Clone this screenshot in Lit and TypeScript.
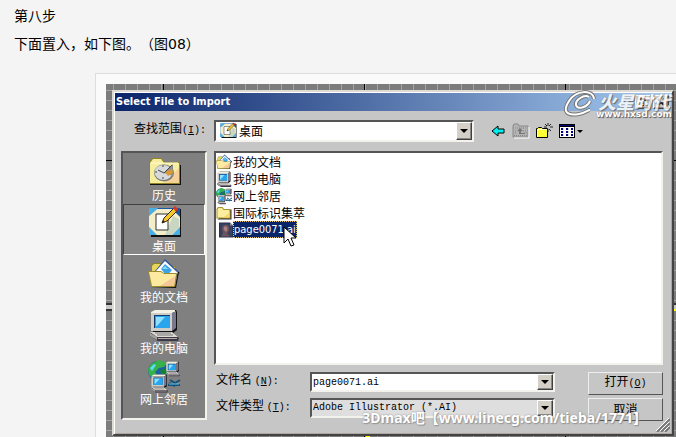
import { LitElement, html, css, svg } from "lit";
import { customElement, property, state } from "lit/decorators.js";
import { classMap } from "lit/directives/class-map.js";

const pc = svg`
  <path d="M4 4l4-3h20l1 2v18l-4 3H5z" fill="#111"/>
  <path d="M3 3l4-2h20v2l-3 1H4v17H3z" fill="#f4f2e4"/>
  <path d="M3 4h21v18H3z" fill="#cfcdc8"/><path d="M24 4l4-2v17l-4 3z" fill="#77788c"/>
  <path d="M6 6h16v13H6z" fill="#16396b"/><path d="M7 7h15v12H7z" fill="#28a5ec"/>
  <path d="M8 8h9l-8 9H8z" fill="#8fe0ff"/>
  <path d="M3 24l21-1 7 6-1 3H10L2 27z" fill="#3a3a46"/>
  <path d="M2 23h22l6 5H9z" fill="#dedad2"/><path d="M2 24l7 4v3l-7-4z" fill="#a5a09c"/>
  <path d="M7 24h16M9 26h16" stroke="#77747c"/><path d="M10 29h19v1H10z" fill="#b8a9a8"/>`;

const art: Record<string, unknown> = {
  history: svg`
    <path d="M2 29h31V9h-1v19H2z" fill="#111"/>
    <path d="M1 6l3-4h9l4 4h15v22H1z" fill="#8d8525"/>
    <path d="M2 7l3-4h8l3 4h15v20H2z" fill="#f6ee9e"/>
    <path d="M16 27l15-15v15z" fill="#f5d199"/><path d="M3 7h27" stroke="#fffbd8"/>
    <ellipse cx="16" cy="17" rx="10" ry="8.500" fill="#777"/>
    <ellipse cx="15.500" cy="16.500" rx="9" ry="7.500" fill="#d7d9da"/>
    <path d="M16 17l9-9v12z" fill="#8a8d94"/><path d="M17 16l7-3 1 4-5 3z" fill="#d89a32"/>
    <path d="M16 17l8-8M16 17l-6-3M15 9v2M7 16h2M15 23v-2" stroke="#444"/>`,
  desktop: svg`
    <path d="M2 2h31v28H3z" fill="#111"/><path d="M1 1h31v27H1z" fill="#1559a8"/>
    <path d="M1 1h9L1 9zM1 20l9 8H1zM32 20v8h-9z" fill="#47b1e7"/>
    <path d="M9 2h15l8 8v10l-8 8H9l-8-8V9z" fill="#f3edc9"/>
    <path d="M25 9l6 3v8l-7 8h-7z" fill="#c9d6c2"/>
    <path d="M8 7h12v16H8z" fill="#fff" stroke="#333"/>
    <path d="M14 16l2-5L26 1l3 3-10 10z" fill="#f6c62f" stroke="#3a2a13"/>
    <path d="M25 1l2-2 3 3-2 3z" fill="#dc3424"/><path d="M14 16l1-3 2 2z" fill="#222"/>`,
  documents: svg`
    <path d="M3 8l2-3h8l3 3h12v21H3z" fill="#8d8525"/><path d="M4 8l2-2h6l3 3h12v10H4z" fill="#e8d55c"/>
    <path d="M7 13L17 1l15 14-10 10z" fill="#31579c"/><path d="M8 13l9-10 13 12-9 9z" fill="#fff"/>
    <path d="M13 11l4-5 7 6-5 6z" fill="#3ba2e4"/><path d="M14 11l3-3 3 3z" fill="#8ad8fa"/>
    <path d="M2 30h26l3-16h-1l-3 15z" fill="#111"/>
    <path d="M0 13h13l3 2h13l-2 14H3z" fill="#9d8b30"/><path d="M1 14h12l3 2h12l-2 12H4z" fill="#fbeaa0"/>
    <path d="M12 28l15-10-1 10z" fill="#f5c896"/>`,
  computer: pc,
  network: svg`
    <circle cx="10" cy="11" r="10" fill="#1b5fa8"/>
    <path d="M3 4l8-4 8 3-3 4-5 1-4 4 3 4-4 2-5-3-1-6z" fill="#37b14a"/>
    <path d="M12 10l7-2 1 6-6 4z" fill="#17803a"/><path d="M2 8l4-4 2 1-4 6z" fill="#5fdcf5"/>
    <g transform="translate(17 1) scale(.48)">${pc}</g>
    <g transform="translate(2 14) scale(.58)">${pc}</g>
    <path d="M20 25h12M22 20l5 3 5-3M21 23l6 3" stroke="#164f77" stroke-width="2" fill="none"/>
    <path d="M21 24h10" stroke="#5cc4f0"/>`,
  folder: svg`
    <path d="M3 29h28V9h-2z" fill="#333"/>
    <path d="M1 8l3-4h9l3 4h13v19H1z" fill="#a3942d"/><path d="M3 9l2-3h7l3 4h12v15H3z" fill="#fcee9c"/>
    <path d="M14 25l13-9v9z" fill="#f7d66c"/>`,
  ai: svg`
    <path d="M2 1h22l6 6v24H2z" fill="#26324e"/><path d="M4 3h18l6 5v21H4z" fill="#38415d"/>
    <path d="M9 10c2-6 12-6 13 0s0 10-4 12l6 7H7l3-9c-2-3-3-6-1-10z" fill="#6b5460"/>
    <path d="M12 10c3-4 8 0 7 4s-2 6-4 5-5-6-3-9z" fill="#a87f84"/>
    <path d="M24 1v6h6z" fill="#8b93a6"/>`,
  back: svg`<path d="M1 8l6-5v3h6v4H7v3z" fill="#00f0f0" stroke="#000"/>`,
  up: svg`
    <path d="M-1 14V3l1-2h4l1 2h9v11z" fill="#b4b4b4" stroke="#888"/>
    <path d="M0 12.500h13M1 5h12M1 8h2M1 10h2M9 8h4M10 10h3" stroke="#888" stroke-dasharray="1 1"/>
    <path d="M3 8l3-3 3 3H7v2h4v1H5V8z" fill="#777"/><path d="M0 15h15V4" stroke="#fff" fill="none"/>`,
  create: svg`
    <path d="M-0.500 14.500v-9h1l1-1h3l1 1h5v9z" fill="#ffff36" stroke="#000"/>
    <path d="M0 14v-8h10v1H1v7z" fill="#ffffb0"/>
    <path d="M11 0v3M11 6v3M7 4h3M13 4h3M8 1l2 2M14 1l-2 2M14 8l-2-2" stroke="#222"/>`,
  view: svg`
    <path d="M-1 1h16v14H-1z" fill="#000"/><path d="M0 4h14v10H0z" fill="#fff"/><path d="M0 2h14v1H0z" fill="#000080"/>
    <path d="M1 6h2M6 6h2M11 6h2M1 9h2M6 9h2M11 9h2M1 12h2M6 12h2M11 12h2" stroke="#000080" stroke-width="2"/>
    <path d="M3 6h1M8 6h1M3 9h1M8 9h1M3 12h1M8 12h1" stroke="#aaa"/>`,
};

@customElement("win-icon")
class WinIcon extends LitElement {
  @property() name = "folder";
  @property({ type: Number }) grid = 32;
  static styles = css`
    :host { display: block; flex: none; width: 16px; height: 16px; }
    svg { display: block; width: 100%; height: 100%; overflow: visible; }
  `;
  render() {
    return html`<svg viewBox="0 0 ${this.grid} ${this.grid}" fill="none" aria-hidden="true">${art[this.name]}</svg>`;
  }
}

@customElement("app-root")
class AppRoot extends LitElement {
  @state() place = "desktop";

  private places = [
    ["history", "历史"],
    ["desktop", "桌面"],
    ["documents", "我的文档"],
    ["computer", "我的电脑"],
    ["network", "网上邻居"],
  ];
  private files = [
    ["documents", "我的文档"],
    ["computer", "我的电脑"],
    ["network", "网上邻居"],
    ["folder", "国际标识集萃"],
  ];

  static styles = css`
    :host {
      display: block;
      background: #f4f4f4;
      color: #000;
      font: 12px/14px "Noto Sans CJK SC", sans-serif;
    }
    * { box-sizing: border-box; }
    button, input, select { font: inherit; color: inherit; margin: 0; padding: 0; border: 0; border-radius: 0; background: none; outline: 0; }
    .prose { padding: 2px 14px 15px; font: 14px/28px "DejaVu Sans", "Noto Sans CJK SC", sans-serif; text-spacing-trim: space-all; }
    .prose p { margin: 0; }
    .figure {
      margin: 0 0 0 95px; padding: 10px 0 0 10px; background: #fafafa;
      border: solid #ddd; border-width: 1px 0 0 1px;
    }
    .stage {
      position: relative; padding: 6px 2px 1px 6px;
      background:
        linear-gradient(#ff0, #ff0) 100% 225px / 3px 2px no-repeat,
        linear-gradient(#ff0, #ff0) 260px 100% / 4px 1px no-repeat,
        linear-gradient(#333 2px, #c8c8c8 2px, #c8c8c8 6px, #333 6px) 0 219px / 100% 8px no-repeat,
        linear-gradient(#000, #000) 0 76px / 100% 1px no-repeat,
        linear-gradient(90deg, #000 1px, transparent 1px) 57px 0 / 201px 100%,
        linear-gradient(90deg, #a4a4a4 1px, transparent 1px) 7px 0 / 12px 100%,
        linear-gradient(#a4a4a4 1px, transparent 1px) 0 6px / 100% 10px,
        #7c7c7c;
    }
    .dialog {
      position: relative; background: #c6c6c6; padding: 1px;
      border: 2px solid; border-color: #dedbd5 #444 #444 #dedbd5;
      box-shadow: inset 1px 1px #fff, inset -1px -1px #aaa69d;
    }
    .title {
      display: flex; align-items: center; height: 18px; padding: 0 2px 0 1px; gap: 2px;
      background: linear-gradient(90deg, #0a246a, #a6caf0); color: #fff;
    }
    h1 { flex: 1; margin: 0; font: bold 11px/18px "DejaVu Sans Condensed", "Noto Sans", sans-serif; }
    .raised { background: #d4d0c8; border: 1px solid; border-color: #fff #404040 #404040 #fff; box-shadow: inset -1px -1px #888; }
    .sunken { border: 2px solid; border-color: #555 #f4f2ec #f4f2ec #555; }
    .caption { display: grid; place-items: center; width: 16px; height: 14px; }
    .caption svg { width: 10px; height: 10px; }
    .lookin { display: flex; align-items: center; padding: 9px 8px 9px 6px; }
    .lookin > label { width: 93px; padding: 0 0 3px 13px; }
    .key { font: 10px/14px "Liberation Mono", monospace; }
    .combo { display: grid; grid-template-columns: auto minmax(0, 1fr) 16px; align-items: center; background: #fff; height: 22px; }
    .combo select, .combo input { grid-area: 1 / 2 / 2 / 4; width: 100%; height: 100%; appearance: none; }
    .combo win-icon { margin: 0 3px 0 4px; grid-area: 1 / 1; }
    .drop { grid-area: 1 / 3; width: 16px; height: 100%; display: grid; place-items: center; pointer-events: none; }
    .drop::before, .tri::after { content: ""; border: solid transparent; border-width: 4px 4px 0; border-top-color: #000; }
    .lookin .combo { flex: 0 1 260px; }
    .tools { display: flex; gap: 7px; margin-left: 17px; }
    .tools button { display: flex; align-items: center; gap: 1px; }
    .tri::after { border-width: 3px 3px 0; }
    .body { display: grid; grid-template-columns: 86px minmax(0, 1fr); gap: 7px; padding: 0 8px 12px 6px; }
    .places { background: #808080; color: #fff; align-self: start; height: 269px; }
    .place {
      display: flex; flex-direction: column; align-items: center; width: 100%; height: 51px; padding-top: 2px;
      border: 1px solid transparent;
    }
    .place win-icon { width: 32px; height: 32px; }
    .on { border-color: #404040 #fff #fff #404040; background: #868686; }
    .main { display: flex; flex-direction: column; gap: 7px; }
    .list { background: #fff; height: 214px; margin: 0; padding: 0; list-style: none; }
    .file { display: flex; align-items: center; gap: 1px; height: 17px; white-space: nowrap; }
    .picked { padding-left: 2px; gap: 0; }
    .picked span {
      font: 11px/15px "DejaVu Sans Condensed", "Noto Sans", sans-serif;
      background: #0a246a; color: #fff; border: 1px dotted #e8c468; margin-left: -1px;
    }
    .fields { display: grid; grid-template-columns: 96px minmax(0, 1fr) 75px; row-gap: 3px; }
    .fields label { padding-left: 2px; }
    .fields .combo { height: 20px; margin-right: 33px; font: 10px/14px "Liberation Mono", "Noto Sans CJK SC", monospace; }
    .fields select, .fields input { padding-left: 1px; }
    .grey { background: #dedede; }
    .push { height: 23px; padding-bottom: 2px; border: 1px solid; border-color: #eee #555 #555 #eee; }
    .grip { position: absolute; right: 2px; bottom: 2px; width: 14px; height: 14px; }
    .cursor { position: absolute; left: 177px; top: 142px; width: 14px; height: 22px; }
    .brand { position: absolute; right: 4px; top: 7px; width: 107px; height: 28px; color: #fff; text-shadow: 1px 1px 1px #555, 0 0 1px #777; }
    .brand svg { position: absolute; left: 0; top: 0; width: 107px; height: 28px; overflow: visible; }
    .brand b { position: absolute; right: 2px; top: 2px; font: italic 900 18px/16px "Noto Sans CJK SC", sans-serif; opacity: 0.8; }
    .brand i { position: absolute; right: 0; top: 19px; font: normal bold 9px/8px "DejaVu Sans", sans-serif; }
    .credit {
      position: absolute; right: 29px; bottom: 9px; white-space: nowrap; color: #fff;
      font: bold 14px/20px "Noto Sans", "Noto Sans CJK SC", sans-serif; text-shadow: 0 0 2px #888, 1px 1px 1px #999;
    }
  `;

  render() {
    return html`
      <div class="prose"><p>第八步</p><p>下面置入，如下图。（图08）</p></div>
      <div class="figure"><div class="stage">
        <form class="dialog" @submit=${(e: Event) => e.preventDefault()}>
          <div class="title">
            <h1>Select File to Import</h1>
            <button type="button" class="raised caption" aria-label="Help">
              <svg viewBox="0 0 10 10" aria-hidden="true"><path d="M3 4V2h4v2L5 6v1M5 8v1" fill="none" stroke="#000" stroke-width="2"/></svg>
            </button>
            <button type="button" class="raised caption" aria-label="Close">
              <svg viewBox="0 0 10 10" aria-hidden="true"><path d="M2 2l6 6M8 2L2 8" stroke="#000" stroke-width="2"/></svg>
            </button>
          </div>
          <div class="lookin">
            <label for="where">查找范围<span class="key">(<u>I</u>):</span></label>
            <div class="combo sunken">
              <win-icon name="desktop"></win-icon>
              <select id="where"><option>桌面</option></select>
              <span class="drop raised"></span>
            </div>
            <div class="tools">
              ${["back", "up", "create", "view"].map((n) => html`
                <button type="button" aria-label=${n} class=${classMap({ tri: n === "view" })}>
                  <win-icon name=${n} grid="16"></win-icon>
                </button>`)}
            </div>
          </div>
          <div class="body">
            <div class="places sunken">
              ${this.places.map(([id, label]) => html`
                <button type="button" class=${classMap({ place: true, on: this.place === id })} @click=${() => (this.place = id)}>
                  <win-icon name=${id}></win-icon>${label}
                </button>`)}
            </div>
            <div class="main">
              <ul class="list sunken">
                ${this.files.map(([icon, label]) => html`
                  <li class="file"><win-icon name=${icon}></win-icon><span>${label}</span></li>`)}
                <li class="file picked"><win-icon name="ai"></win-icon><span>page0071.ai</span></li>
              </ul>
              <div class="fields">
                <label for="name">文件名 <span class="key">(<u>N</u>):</span></label>
                <div class="combo sunken"><input id="name" value="page0071.ai" /><span class="drop raised"></span></div>
                <button class="push">打开<span class="key">(<u>O</u>)</span></button>
                <label for="type">文件类型 <span class="key">(<u>T</u>):</span></label>
                <div class="combo sunken grey">
                  <select id="type"><option>Adobe Illustrator (*.AI)</option></select><span class="drop raised"></span>
                </div>
                <button type="button" class="push">取消</button>
              </div>
            </div>
          </div>
          <svg class="grip" viewBox="0 0 14 14" aria-hidden="true">
            <path d="M1 14L14 1M5 14l9-9M9 14l5-5" stroke="#777" stroke-width="2"/>
            <path d="M0 13L13 0M4 13l9-9M8 13l5-5" stroke="#fff"/>
          </svg>
        </form>
        <svg class="cursor" viewBox="0 0 14 22" aria-hidden="true">
          <path d="M1 1v16l4-4 3 7 3-1-3-7h5z" fill="#fff" stroke="#000"/>
        </svg>
        <div class="brand">
          <svg viewBox="0 0 107 28" fill="none" aria-hidden="true">
            <path d="M29 8C28-2 11-1 4 10S2 25 14 23c6-1 9-4 11-4" stroke="#777" stroke-width="4"/>
            <path d="M24 6c-5-3-14 3-13 8s11 3 14-4" stroke="#777" stroke-width="4"/>
            <path d="M29 8C28-2 11-1 4 10S2 25 14 23c6-1 9-4 11-4" stroke="#fff" stroke-width="2"/>
            <path d="M24 6c-5-3-14 3-13 8s11 3 14-4" stroke="#fff" stroke-width="2"/>
          </svg>
          <b>火星时代</b><i>www.hxsd.com</i>
        </div>
        <div class="credit">3Dmax吧【www.linecg.com/tieba/1771】</div>
      </div></div>
    `;
  }
}
